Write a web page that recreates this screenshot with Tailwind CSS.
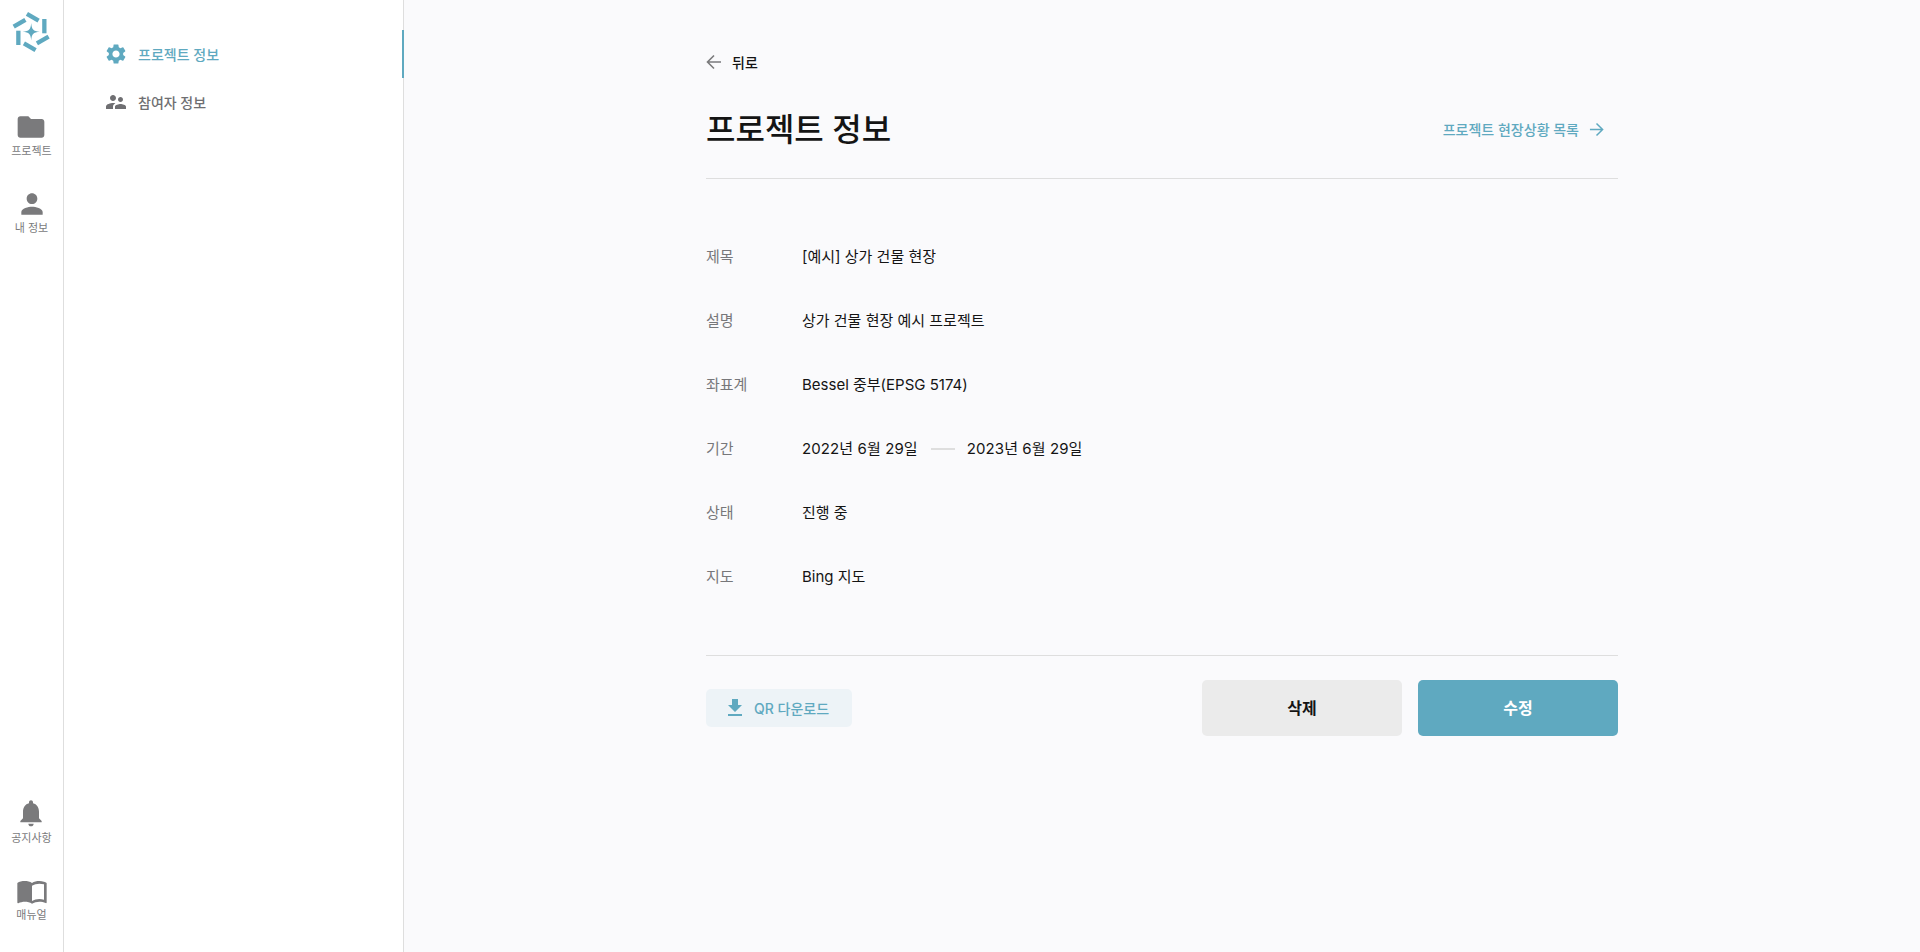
<!DOCTYPE html>
<html lang="ko">
<head>
  <meta charset="UTF-8" />
  <title>프로젝트 정보</title>
  <script src="https://cdn.jsdelivr.net/npm/@tailwindcss/browser@4"></script>
</head>
<body class="h-[952px] overflow-hidden bg-[#fafafc] font-['Inter','Noto_Sans_CJK_KR',sans-serif] text-[#141414]">
  <div class="flex h-[952px]">
    <!-- Icon rail -->
    <aside class="w-[64px] h-full shrink-0 bg-white border-r border-[#dedede] flex flex-col items-center text-[#7a7a7c]">
      <svg class="mt-[11px] w-[40px] h-[42px]" viewBox="0 0 40 42" fill="#5fa9c0">
        <rect x="14" y="4.1" width="13.5" height="4.4" transform="rotate(30 20.8 6.3)" />
        <rect x="0.8" y="10.1" width="13.5" height="4.4" transform="rotate(-30 7.5 12.3)" />
        <rect x="4.2" y="19.7" width="4.3" height="14.3" />
        <rect x="30.2" y="8" width="4.3" height="14.3" />
        <rect x="24" y="26.8" width="13.5" height="4.4" transform="rotate(-30 30.8 29)" />
        <rect x="11" y="33.5" width="13.5" height="4.4" transform="rotate(30 17.8 35.7)" />
        <path d="M19.2 12 C19.8 18.6 21 20 27.8 20.7 C21 21.4 19.8 22.8 19.2 29.4 C18.6 22.8 17.4 21.4 10.6 20.7 C17.4 20 18.6 18.6 19.2 12Z" />
      </svg>
      <a class="mt-[58px] flex flex-col items-center text-[11px] leading-[14px]">
        <svg class="w-[32px] h-[32px] mb-[1px]" viewBox="0 0 24 24" fill="currentColor"><path d="M10 4H4c-1.1 0-2 .9-2 2v12c0 1.1.9 2 2 2h16c1.1 0 2-.9 2-2V8c0-1.1-.9-2-2-2h-8l-2-2z"/></svg>
        프로젝트
      </a>
      <a class="mt-[30px] flex flex-col items-center text-[11px] leading-[14px]">
        <svg class="w-[32px] h-[32px] mb-[1px]" viewBox="0 0 24 24" fill="currentColor"><path d="M12 12c2.21 0 4-1.79 4-4s-1.79-4-4-4-4 1.79-4 4 1.79 4 4 4zm0 2c-2.67 0-8 1.34-8 4v2h16v-2c0-2.66-5.33-4-8-4z"/></svg>
        내 정보
      </a>
      <a class="mt-auto flex flex-col items-center text-[11px] leading-[14px]">
        <svg class="w-[32px] h-[32px] mb-[2px]" viewBox="0 0 24 24" fill="currentColor"><path d="M12 22c1.1 0 2-.9 2-2h-4c0 1.1.9 2 2 2zm6-6v-5c0-3.07-1.63-5.64-4.5-6.32V4c0-.83-.67-1.5-1.5-1.5s-1.5.67-1.5 1.5v.68C7.64 5.36 6 7.92 6 11v5l-2 2v1h16v-1l-2-2z"/></svg>
        공지사항
      </a>
      <a class="mt-[30px] mb-[30px] flex flex-col items-center text-[11px] leading-[14px]">
        <svg class="w-[32px] h-[32px] mb-[1px]" viewBox="0 0 24 24" fill="currentColor"><path d="M21 5c-1.11-.35-2.33-.5-3.5-.5-1.95 0-4.05.4-5.5 1.5-1.45-1.1-3.55-1.5-5.5-1.5S2.45 4.9 1 6v14.65c0 .25.25.5.5.5.1 0 .15-.05.25-.05C3.1 20.45 5.05 20 6.5 20c1.95 0 4.05.4 5.5 1.5 1.35-.85 3.8-1.5 5.5-1.5 1.65 0 3.35.3 4.75 1.05.1.05.15.05.25.05.25 0 .5-.25.5-.5V6c-.6-.45-1.25-.75-2-1zm0 13.5c-1.1-.35-2.3-.5-3.5-.5-1.7 0-4.15.65-5.5 1.5V8c1.35-.85 3.8-1.5 5.5-1.5 1.2 0 2.4.15 3.5.5v11.5z"/></svg>
        매뉴얼
      </a>
    </aside>

    <!-- Sub menu -->
    <nav class="w-[340px] h-full shrink-0 bg-white border-r border-[#dedede] pt-[30px] text-[14px] font-medium">
      <a class="h-[48px] pl-[40px] flex items-center gap-[10px] text-[#5fa9c0] border-r-2 border-[#5fa9c0] -mr-px">
        <svg class="w-[24px] h-[24px]" viewBox="0 0 24 24" fill="currentColor"><path d="M19.14 12.94c.04-.3.06-.61.06-.94 0-.32-.02-.64-.07-.94l2.03-1.58a.49.49 0 0 0 .12-.61l-1.92-3.32a.488.488 0 0 0-.59-.22l-2.39.96c-.5-.38-1.03-.7-1.62-.94l-.36-2.54a.484.484 0 0 0-.48-.41h-3.84c-.24 0-.43.17-.47.41l-.36 2.54c-.59.24-1.13.57-1.62.94l-2.39-.96c-.22-.08-.47 0-.59.22L2.74 8.87c-.12.21-.08.47.12.61l2.03 1.58c-.05.3-.09.63-.09.94s.02.64.07.94l-2.03 1.58a.49.49 0 0 0-.12.61l1.92 3.32c.12.22.37.29.59.22l2.39-.96c.5.38 1.03.7 1.62.94l.36 2.54c.05.24.24.41.48.41h3.84c.24 0 .44-.17.47-.41l.36-2.54c.59-.24 1.13-.56 1.62-.94l2.39.96c.22.08.47 0 .59-.22l1.92-3.32c.12-.22.07-.47-.12-.61l-2.01-1.58zM12 15.6c-1.98 0-3.6-1.62-3.6-3.6s1.62-3.6 3.6-3.6 3.6 1.62 3.6 3.6-1.62 3.6-3.6 3.6z"/></svg>
        프로젝트 정보
      </a>
      <a class="h-[48px] pl-[40px] flex items-center gap-[10px] text-[#6f6f72]">
        <svg class="w-[24px] h-[24px]" viewBox="0 0 24 24" fill="currentColor"><path d="M16.5 12c1.38 0 2.49-1.12 2.49-2.5S17.88 7 16.5 7 14 8.12 14 9.5s1.12 2.5 2.5 2.5zM9 11c1.66 0 2.99-1.34 2.99-3S10.66 5 9 5 6 6.34 6 8s1.34 3 3 3zm7.5 3c-1.83 0-5.5.92-5.5 2.75V19h11v-2.25c0-1.83-3.67-2.75-5.5-2.75zM9 13c-2.33 0-7 1.17-7 3.5V19h7v-2.25c0-.85.33-2.34 2.37-3.47C10.5 13.1 9.66 13 9 13z"/></svg>
        참여자 정보
      </a>
    </nav>

    <!-- Content -->
    <main class="flex-1 min-w-0 pl-[302px]">
      <div class="w-[912px]">
        <a class="mt-[52px] h-[20px] flex items-center gap-[10px] text-[14px] font-medium">
          <svg class="w-[16px] h-[16px] text-[#7a7a7c]" viewBox="0 0 16 16" fill="none" stroke="currentColor" stroke-width="1.6"><path d="M15 8H1.5M8 1.5 1.5 8 8 14.5"/></svg>
          뒤로
        </a>
        <div class="mt-[35px] pb-[25px] border-b border-[#dedede] flex items-center justify-between">
          <h1 class="text-[32px] leading-[46px] font-medium">프로젝트 정보</h1>
          <a class="mr-[14px] mb-[2px] flex items-center gap-[10px] text-[14px] font-medium text-[#5fa9c0]">
            프로젝트 현장상황 목록
            <svg class="w-[15px] h-[15px]" viewBox="0 0 16 16" fill="none" stroke="currentColor" stroke-width="1.6"><path d="M1 8h13.5M8 1.5 14.5 8 8 14.5"/></svg>
          </a>
        </div>

        <dl class="pt-[66px] pb-[66px] border-b border-[#dedede] text-[15px] leading-[24px] flex flex-col gap-[40px]">
          <div class="flex"><dt class="w-[96px] text-[#77777a]">제목</dt><dd>[예시] 상가 건물 현장</dd></div>
          <div class="flex"><dt class="w-[96px] text-[#77777a]">설명</dt><dd>상가 건물 현장 예시 프로젝트</dd></div>
          <div class="flex"><dt class="w-[96px] text-[#77777a]">좌표계</dt><dd>Bessel 중부(EPSG 5174)</dd></div>
          <div class="flex">
            <dt class="w-[96px] text-[#77777a]">기간</dt>
            <dd class="flex items-center tracking-[0.1px]">2022년 6월 29일<span class="w-[24px] h-[2px] bg-[#dedede] ml-[13px] mr-[12px]"></span>2023년 6월 29일</dd>
          </div>
          <div class="flex"><dt class="w-[96px] text-[#77777a]">상태</dt><dd>진행 중</dd></div>
          <div class="flex"><dt class="w-[96px] text-[#77777a]">지도</dt><dd>Bing 지도</dd></div>
        </dl>

        <div class="mt-[24px] flex items-center justify-between">
          <button class="w-[146px] h-[38px] pl-[17px] rounded-[5px] bg-[#edf3f7] text-[#5fa9c0] text-[14px] font-medium flex items-center gap-[7px]">
            <svg class="w-[24px] h-[24px]" viewBox="0 0 24 24" fill="currentColor"><path d="M19 9h-4V3H9v6H5l7 7 7-7zM5 18v2h14v-2H5z"/></svg>
            QR 다운로드
          </button>
          <div class="flex gap-[16px]">
            <button class="w-[200px] h-[56px] rounded-[5px] bg-[#ebebeb] text-[16px] font-semibold">삭제</button>
            <button class="w-[200px] h-[56px] rounded-[5px] bg-[#5fa9c0] text-white text-[16px] font-semibold">수정</button>
          </div>
        </div>
      </div>
    </main>
  </div>
</body>
</html>
